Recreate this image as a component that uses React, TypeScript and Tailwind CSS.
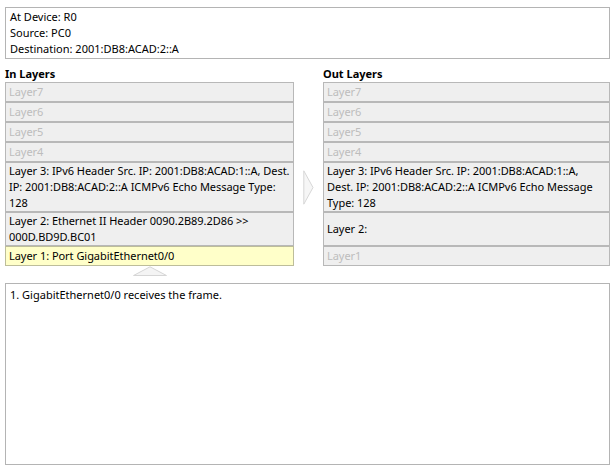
import type { ReactNode } from "react";

type Layer = { text: string; active?: boolean; hot?: boolean };

const IN_LAYERS: Layer[] = [
  { text: "Layer7" },
  { text: "Layer6" },
  { text: "Layer5" },
  { text: "Layer4" },
  { text: "Layer 3: IPv6 Header Src. IP: 2001:DB8:ACAD:1::A, Dest. IP: 2001:DB8:ACAD:2::A ICMPv6 Echo Message Type: 128", active: true },
  { text: "Layer 2: Ethernet II Header 0090.2B89.2D86 >> 000D.BD9D.BC01", active: true },
  { text: "Layer 1: Port GigabitEthernet0/0", active: true, hot: true },
];

const OUT_LAYERS: Layer[] = [
  { text: "Layer7" },
  { text: "Layer6" },
  { text: "Layer5" },
  { text: "Layer4" },
  { text: "Layer 3: IPv6 Header Src. IP: 2001:DB8:ACAD:1::A, Dest. IP: 2001:DB8:ACAD:2::A ICMPv6 Echo Message Type: 128", active: true },
  { text: "Layer 2:", active: true },
  { text: "Layer1" },
];

function Cell({ layer, out }: { layer: Layer; out?: boolean }) {
  return (
    <div
      className={
        "flex min-h-[20px] items-center border pl-[3px] leading-4 tracking-[-0.04px] " +
        (out ? "pr-[4px] " : "") +
        (layer.hot
          ? "border-[#bdbd9a] bg-[#ffffc9] text-black"
          : layer.active
            ? "border-[#b8b8b8] bg-[#efefef] text-black"
            : "border-[#b8b8b8] bg-[#efefef] text-[#bdbdbd]")
      }
    >
      {layer.text}
    </div>
  );
}

function Box({ children, className = "" }: { children: ReactNode; className?: string }) {
  return <div className={"mx-[5px] border border-[#b4b4b4] bg-white " + className}>{children}</div>;
}

export default function App() {
  return (
    <div className="h-[470px] w-[615px] bg-white pt-[7px] text-[11px] text-black" style={{ fontFamily: '"Noto Sans", "Open Sans", sans-serif' }}>
      <Box className="py-px pl-[4px] leading-4">
        <div>At Device: R0</div>
        <div>Source: PC0</div>
        <div>Destination: 2001:DB8:ACAD:2::A</div>
      </Box>

      <div className="mt-[7px] grid grid-cols-[289px_29px_1fr] px-[5px]">
        <div className="leading-4 font-bold">In Layers</div>
        <div />
        <div className="leading-4 font-bold">Out Layers</div>
        {IN_LAYERS.map((l, i) => (
          <Row key={i} left={l} right={OUT_LAYERS[i]} arrow={i === 4} />
        ))}
        <div className="flex h-[17px] items-start justify-center">
          <svg width="34" height="10" viewBox="0 0 34 10">
            <path d="M0.5 9.5 L17 0.8 L33.5 9.5 Z" fill="#f4f4f4" stroke="#d6d6d6" strokeWidth="1" />
          </svg>
        </div>
      </div>

      <Box className="h-[182px] pt-[3px] pl-[4px] leading-4">1. GigabitEthernet0/0 receives the frame.</Box>
    </div>
  );
}

function Row({ left, right, arrow }: { left: Layer; right: Layer; arrow: boolean }) {
  return (
    <>
      <Cell layer={left} />
      <div className="flex items-center justify-center">
        {arrow && (
          <svg width="11" height="35" viewBox="0 0 11 35">
            <path d="M0.8 0.8 L10 17.5 L0.8 34.2 Z" fill="#f6f6f6" stroke="#d6d6d6" strokeWidth="1" />
          </svg>
        )}
      </div>
      <Cell layer={right} out />
    </>
  );
}
